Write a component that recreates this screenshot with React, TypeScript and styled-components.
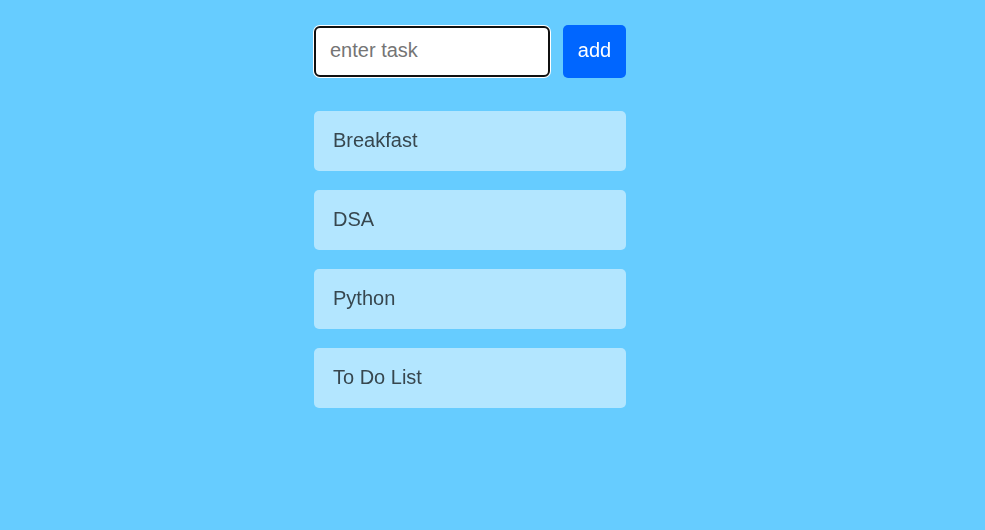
import React, { useState } from "react";
import styled, { createGlobalStyle } from "styled-components";

const GlobalStyle = createGlobalStyle`
  html, body {
    margin: 0;
    padding: 0;
    background-color: #66ccff;
    font-family: "Liberation Sans", Arial, sans-serif;
  }
`;

const Page = styled.main`
  min-height: 530px;
  padding: 25px 0 0 314px;
  box-sizing: border-box;
`;

const Column = styled.div`
  width: 312px;
`;

const Form = styled.form`
  display: flex;
  align-items: center;
  margin-bottom: 33px;
`;

const TaskInput = styled.input`
  width: 236px;
  height: 51px;
  box-sizing: border-box;
  padding: 0 12px 2px 14px;
  border: 2px solid #101010;
  border-radius: 6px;
  box-shadow: 0 0 0 1px #ffffff;
  background: #ffffff;
  font-family: inherit;
  font-size: 20px;
  color: #000;
  caret-color: #000;
  outline: none;

  &::placeholder {
    color: #757575;
  }
`;

const AddButton = styled.button`
  margin-left: 13px;
  width: 63px;
  height: 53px;
  padding: 0 0 2px;
  border: none;
  border-radius: 5px;
  background-color: #0066ff;
  color: #ffffff;
  font-family: inherit;
  font-size: 20px;
  cursor: pointer;
`;

const TaskList = styled.ul`
  list-style: none;
  margin: 0;
  padding: 0;
  display: flex;
  flex-direction: column;
  gap: 19px;
`;

const TaskItem = styled.li`
  height: 60px;
  box-sizing: border-box;
  display: flex;
  align-items: center;
  padding: 0 19px 2px;
  border-radius: 5px;
  background-color: rgba(255, 255, 255, 0.5);
  color: #37474f;
  font-size: 20px;
`;

export default function App() {
  const [tasks, setTasks] = useState(["Breakfast", "DSA", "Python", "To Do List"]);
  const [text, setText] = useState("");

  const addTask = (e: React.FormEvent) => {
    e.preventDefault();
    if (!text.trim()) return;
    setTasks([...tasks, text.trim()]);
    setText("");
  };

  return (
    <Page>
      <GlobalStyle />
      <Column>
        <Form onSubmit={addTask}>
          <TaskInput
            autoFocus
            placeholder="enter task"
            value={text}
            onChange={(e) => setText(e.target.value)}
          />
          <AddButton type="submit">add</AddButton>
        </Form>
        <TaskList>
          {tasks.map((task) => (
            <TaskItem key={task}>{task}</TaskItem>
          ))}
        </TaskList>
      </Column>
    </Page>
  );
}
